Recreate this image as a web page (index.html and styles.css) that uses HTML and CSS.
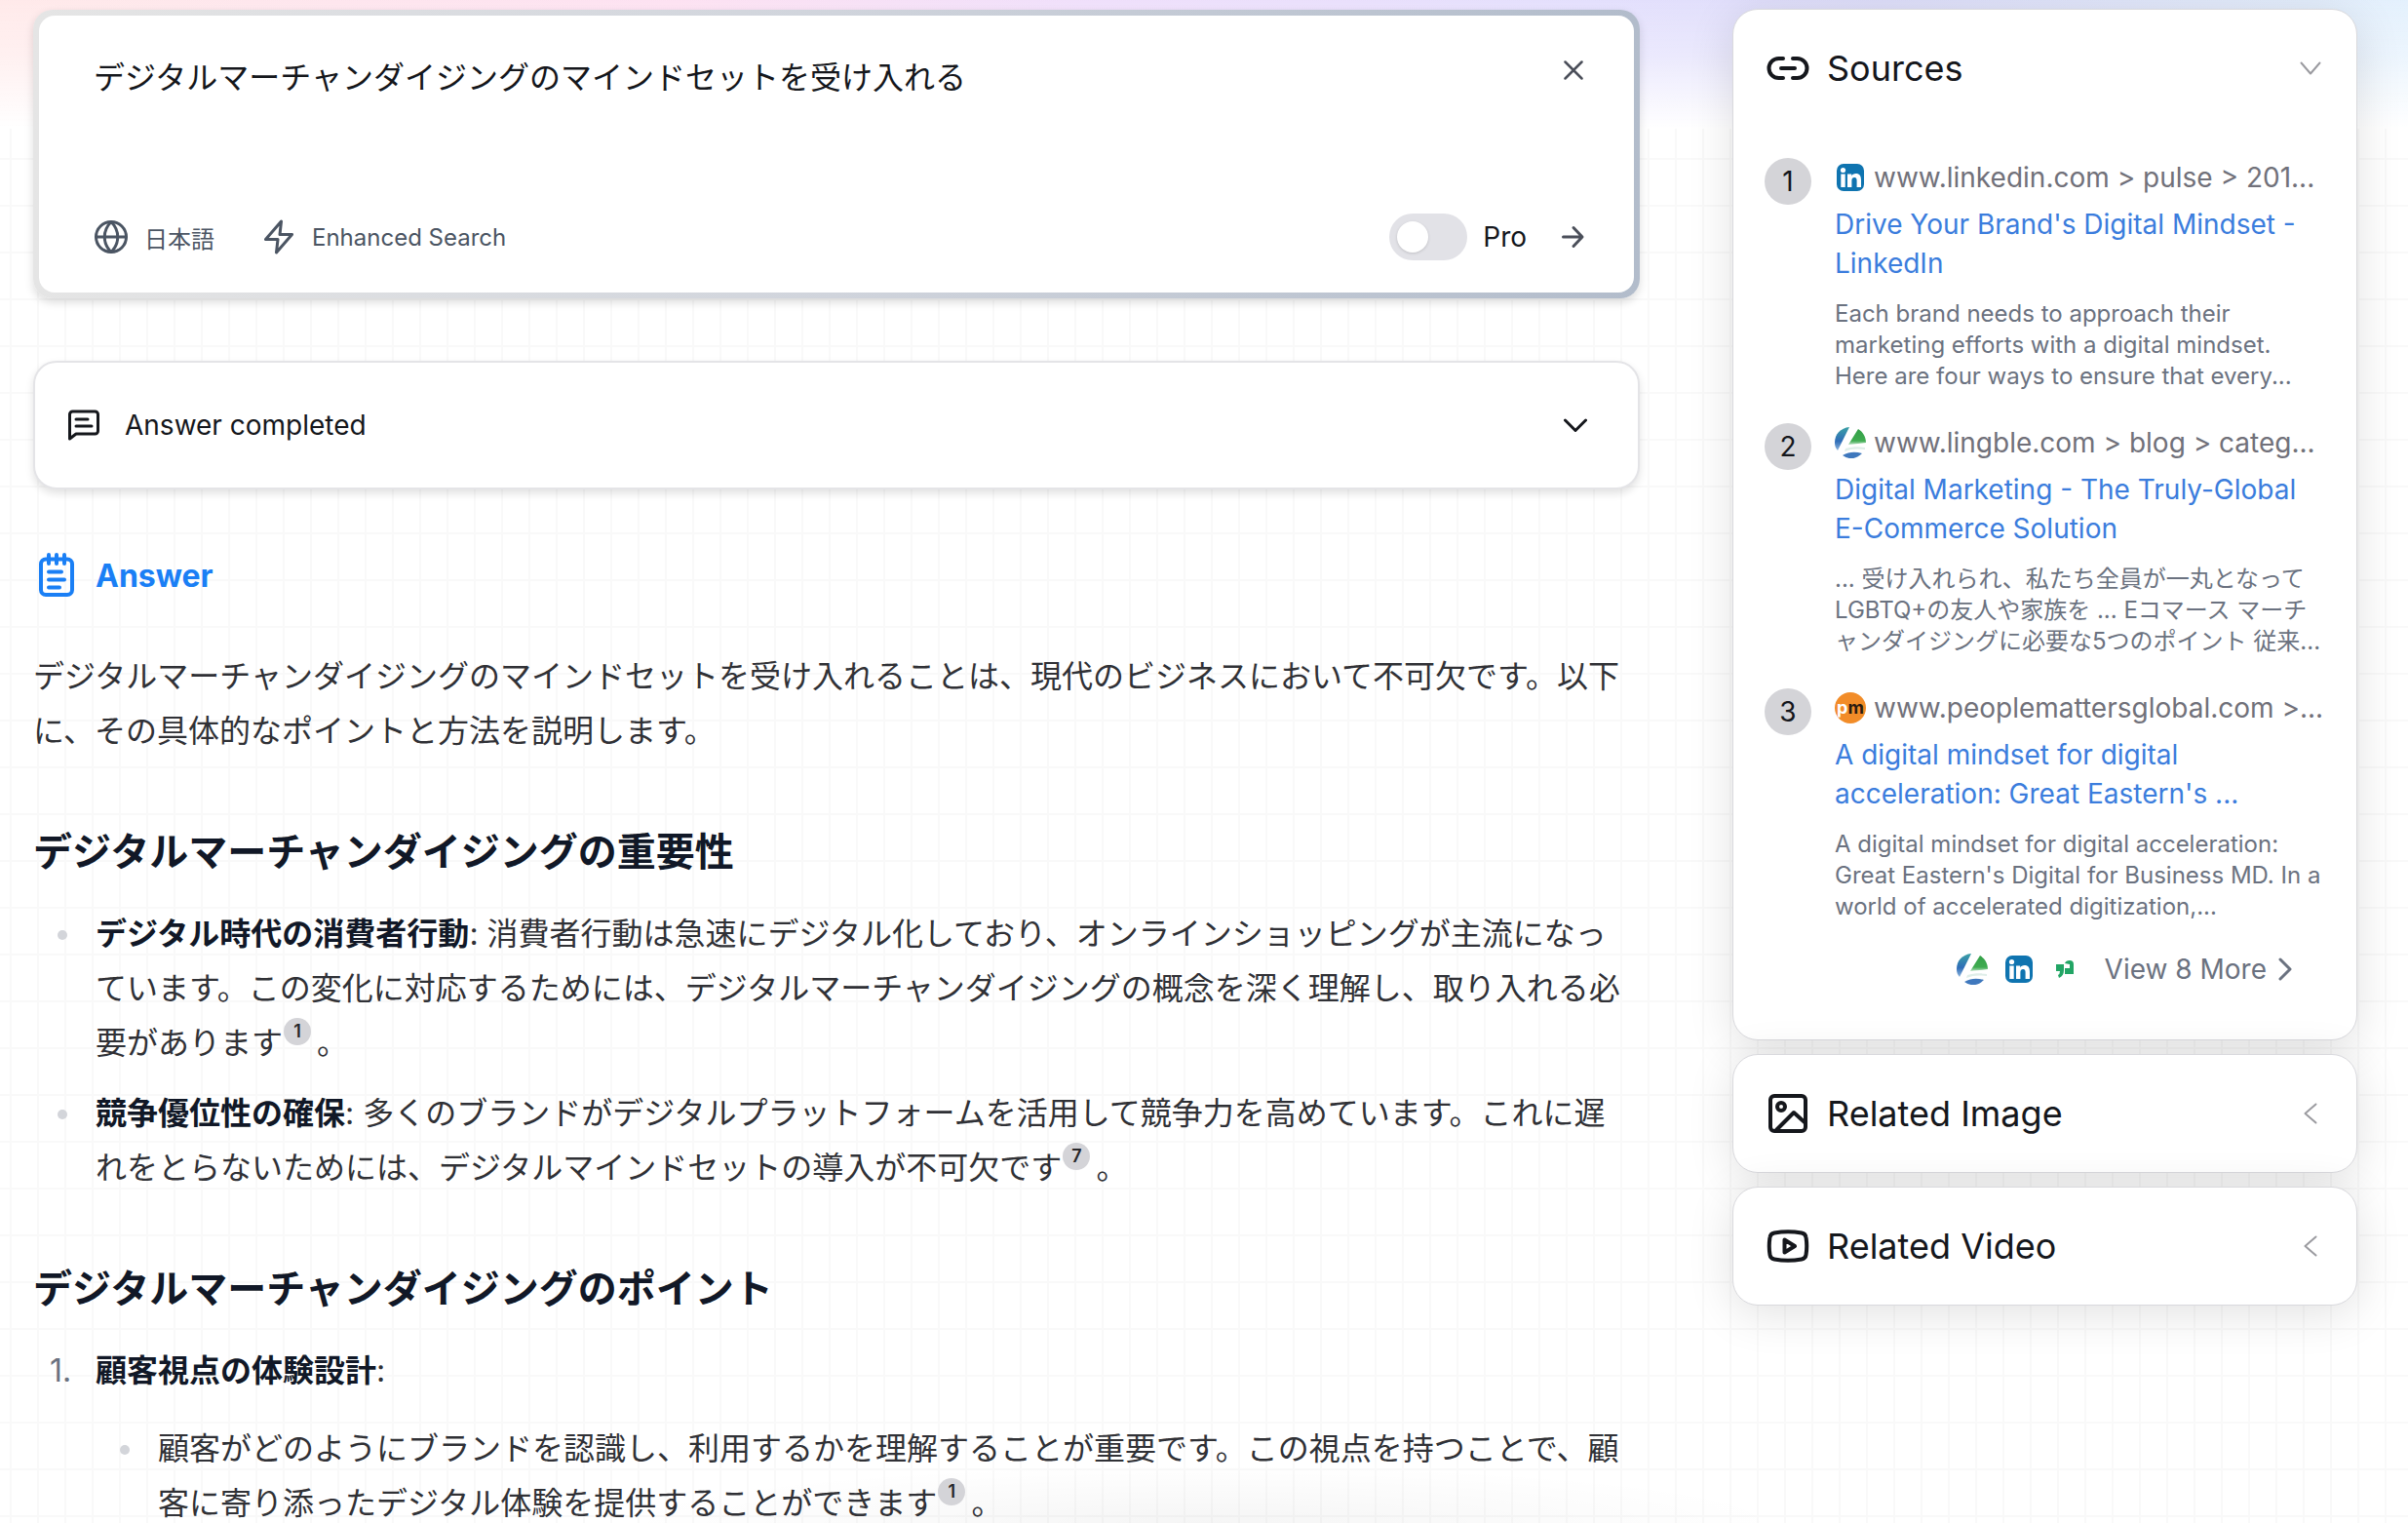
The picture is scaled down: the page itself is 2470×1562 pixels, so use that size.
FILE: index.html
```html
<!DOCTYPE html>
<html lang="ja">
<head>
<meta charset="utf-8">
<meta name="viewport" content="width=device-width, initial-scale=1">
<title>デジタルマーチャンダイジングのマインドセットを受け入れる</title>
<link rel="stylesheet" href="styles.css">
</head>
<body>
<svg class="defs" aria-hidden="true">
  <symbol id="linkedin" viewBox="0 0 32 32">
    <rect x="2" y="2" width="28" height="28" rx="7" fill="#0f74b0"/>
    <g fill="#fff"><circle cx="8.500" cy="8.500" r="2.600"/><rect x="6.300" y="12.500" width="4.400" height="13.500"/><path d="M13 12.500h4.200v1.900c.8-1.400 2.400-2.300 4.400-2.300 4 0 5.400 2.500 5.400 6.600V26h-4.400v-6.500c0-2-.5-3.500-2.400-3.500-2.100 0-2.800 1.500-2.800 3.500V26H13z"/></g>
  </symbol>
  <symbol id="lingble" viewBox="0 0 32 32">
    <defs>
      <linearGradient id="lg1" x1="0" y1="0" x2="0" y2="1"><stop offset="0" stop-color="#3aa0a5"/><stop offset=".6" stop-color="#2f6db8"/><stop offset="1" stop-color="#8db4dc"/></linearGradient>
      <linearGradient id="lg2" x1="0" y1="0" x2="0" y2="1"><stop offset="0" stop-color="#34a048"/><stop offset=".75" stop-color="#3fab50"/><stop offset="1" stop-color="#b5dfc0"/></linearGradient>
    </defs>
    <path d="M15 0C6 1 0 7 0 16c0 3 1 6 3 8z" fill="url(#lg1)"/>
    <path d="M24 2c5 3 8 8 8 14-5 1-11 1-18 2z" fill="url(#lg2)"/>
    <path d="M8 29c7-4 13-4 20-2-6 6-13 7-20 2z" fill="#3f78bd"/>
    <path d="M11 22c7-2 14-2 20-1v2c-7-1-14-1-21 2z" fill="#dfeee9"/>
  </symbol>
  <symbol id="chev" viewBox="0 0 24 24"><path d="M2.500 6.500L12 17.500l9.500-11"/></symbol>
</svg>

<div class="page">
  <main class="main">
    <form class="search">
      <div class="search-box">
        <div class="row">
          <input class="query" type="text" aria-label="検索" value="デジタルマーチャンダイジングのマインドセットを受け入れる">
          <button class="icon-btn" type="button" aria-label="Clear"><svg class="i20" viewBox="0 0 20 20"><path d="M1.500 1.500l17 17M18.500 1.500l-17 17"/></svg></button>
        </div>
        <div class="row tools">
          <button class="tool" type="button"><svg class="i36" viewBox="0 0 36 36"><circle cx="18" cy="18" r="15.500"/><path d="M2.500 18h31M18 2.500c-9 9-9 22 0 31M18 2.500c9 9 9 22 0 31"/></svg><span>日本語</span></button>
          <button class="tool" type="button"><svg class="i36" viewBox="0 0 36 36"><path d="M20.500 2L4.500 20.500H17L15.500 34 31.500 15.500H19z"/></svg><span>Enhanced Search</span></button>
          <label class="pro"><input class="switch" type="checkbox" role="switch"><span>Pro</span></label>
          <button class="icon-btn" type="submit" aria-label="Search"><svg class="i24" viewBox="0 0 24 24"><path d="M1.500 12h19M12 2.500l9 9.500-9 9.500"/></svg></button>
        </div>
      </div>
    </form>

    <button class="status" type="button">
      <svg class="i36" viewBox="0 0 36 36"><path d="M3.500 32V7a3 3 0 0 1 3-3h23a3 3 0 0 1 3 3v17a3 3 0 0 1-3 3H10zM10 12h12M10 19h16"/></svg>
      <span class="grow">Answer completed</span>
      <svg class="i24" viewBox="0 0 24 24"><path d="M1.500 7L12 17.500 22.500 7"/></svg>
    </button>

    <h2 class="answer-title">
      <svg class="note" viewBox="0 0 40 46"><rect x="4" y="6.500" width="32" height="36.500" rx="5"/><path d="M12 2v9M20 2v9M28 2v9M12 19.500h13M12 27.500h16M12 35.500h11"/></svg>
      <span>Answer</span>
    </h2>

    <article class="prose">
      <p>デジタルマーチャンダイジングのマインドセットを受け入れることは、現代のビジネスにおいて不可欠です。以下に、その具体的なポイントと方法を説明します。</p>
      <h3>デジタルマーチャンダイジングの重要性</h3>
      <ul>
        <li><strong>デジタル時代の消費者行動</strong>: 消費者行動は急速にデジタル化しており、オンラインショッピングが主流になっています。この変化に対応するためには、デジタルマーチャンダイジングの概念を深く理解し、取り入れる必要があります<a class="cite" href="#source-1">1</a>。</li>
        <li><strong>競争優位性の確保</strong>: 多くのブランドがデジタルプラットフォームを活用して競争力を高めています。これに遅れをとらないためには、デジタルマインドセットの導入が不可欠です<a class="cite" href="#source-7">7</a>。</li>
      </ul>
      <h3>デジタルマーチャンダイジングのポイント</h3>
      <ol>
        <li><strong>顧客視点の体験設計</strong>:
          <ul>
            <li>顧客がどのようにブランドを認識し、利用するかを理解することが重要です。この視点を持つことで、顧客に寄り添ったデジタル体験を提供することができます<a class="cite" href="#source-1">1</a>。</li>
          </ul>
        </li>
      </ol>
    </article>
  </main>

  <aside class="side">
    <section class="card">
      <button class="card-head" type="button">
        <svg class="i48" viewBox="0 0 48 48"><path d="M19 14h-4.500a10 10 0 0 0 0 20H19M29 14h4.500a10 10 0 0 1 0 20H29M17 24h14"/></svg>
        <span class="grow">Sources</span>
        <svg class="thin" viewBox="0 0 24 24"><use href="#chev"/></svg>
      </button>
      <ol class="sources">
        <li class="source" id="source-1">
          <span class="num">1</span>
          <div class="source-body">
            <div class="url"><svg class="fav"><use href="#linkedin"/></svg><span>www.linkedin.com &gt; pulse &gt; 201...</span></div>
            <a class="title" href="#source-1">Drive Your Brand's Digital Mindset - LinkedIn</a>
            <p class="snippet">Each brand needs to approach their marketing efforts with a digital mindset. Here are four ways to ensure that every...</p>
          </div>
        </li>
        <li class="source" id="source-2">
          <span class="num">2</span>
          <div class="source-body">
            <div class="url"><svg class="fav"><use href="#lingble"/></svg><span>www.lingble.com &gt; blog &gt; categ...</span></div>
            <a class="title" href="#source-2">Digital Marketing - The Truly-Global E-Commerce Solution</a>
            <p class="snippet">... 受け入れられ、私たち全員が一丸となって LGBTQ+の友人や家族を ... Eコマース マーチャンダイジングに必要な5つのポイント 従来...</p>
          </div>
        </li>
        <li class="source" id="source-3">
          <span class="num">3</span>
          <div class="source-body">
            <div class="url"><span class="fav pm"><span>p</span><span class="pm-m">m</span></span><span>www.peoplemattersglobal.com &gt;...</span></div>
            <a class="title" href="#source-3">A digital mindset for digital acceleration: Great Eastern's ...</a>
            <p class="snippet">A digital mindset for digital acceleration: Great Eastern's Digital for Business MD. In a world of accelerated digitization,...</p>
          </div>
        </li>
      </ol>
      <button class="more" type="button">
        <svg class="fav"><use href="#lingble"/></svg>
        <svg class="fav"><use href="#linkedin"/></svg>
        <svg class="fav" viewBox="0 0 32 32"><path d="M6 11h8v6q0 6-5 8l-1-3q2-1 2-4H6zM15 10q1-3 5-3 4 0 4 4v10h-9v-6h5v-4z" fill="#22a565"/></svg>
        <span class="more-text">View 8 More</span>
        <svg class="more-chev" viewBox="0 0 14 24"><path d="M2 2l10 10L2 22"/></svg>
      </button>
    </section>

    <section class="card">
      <button class="card-head" type="button">
        <svg class="i48" viewBox="0 0 48 48"><rect x="6" y="6" width="36" height="36" rx="4"/><circle cx="17" cy="17" r="4"/><path d="M12 41l18-18 11 10"/></svg>
        <span class="grow">Related Image</span>
        <svg class="thin left" viewBox="0 0 24 24"><use href="#chev"/></svg>
      </button>
    </section>
    <section class="card">
      <button class="card-head" type="button">
        <svg class="i48" viewBox="0 0 48 48"><path d="M10 10.500q14-2.500 28 0 4 .8 4.500 4.500 1.500 9 0 18-.5 3.700-4.500 4.500-14 2.500-28 0-4-.8-4.500-4.500-1.500-9 0-18 .5-3.700 4.500-4.500zM20.500 17.500v13L31 24z"/></svg>
        <span class="grow">Related Video</span>
        <svg class="thin left" viewBox="0 0 24 24"><use href="#chev"/></svg>
      </button>
    </section>
  </aside>
</div>
</body>
</html>
```

FILE: styles.css
```css
* { box-sizing: border-box; }

html { height: 100%; overflow: hidden; }

body {
  margin: 0;
  min-height: 100%;
  color: #15171c;
  font-family: Inter, "Noto Sans CJK JP", sans-serif;
  font-size: 28px;
  background:
    radial-gradient(ellipse 600px 60px at 50% 100%, rgba(0, 0, 0, .04), rgba(0, 0, 0, 0)) fixed,
    linear-gradient(to bottom, rgba(255, 255, 255, 0), rgba(255, 255, 255, .3) 56px, #fff 132px, rgba(255, 255, 255, 0) 132px),
    linear-gradient(to right, #ffeaea, #fde2f2 28%, #f0e0fb 45%, #e4e0fd 66%, #dedefa 78%, #e2eafb 92%, #e4f1fd) 0 0 / 100% 132px no-repeat,
    linear-gradient(to right, #f9f9f9 2px, transparent 2px) 10px 0 / 28px 48px,
    linear-gradient(to bottom, #f9f9f9 2px, transparent 2px) 0 18px / 28px 48px,
    #fff;
}

button, input { font: inherit; color: inherit; }
button { margin: 0; padding: 0; border: 0; background: none; text-align: left; }
h2, h3, p, ul, ol { margin: 0; padding: 0; }

svg { flex: none; fill: none; stroke: currentColor; stroke-width: 3; stroke-linecap: round; stroke-linejoin: round; }
.defs { position: absolute; width: 0; height: 0; }
.i20 { width: 20px; height: 20px; stroke-width: 2.500; }
.i24 { width: 24px; height: 24px; stroke-width: 3; }
.i36 { width: 36px; height: 36px; }
.i48 { width: 48px; height: 48px; stroke-width: 4; }
.thin { width: 24px; height: 24px; margin-right: 12px; stroke-width: 2; color: #9b9ba0; }
.left { transform: rotate(90deg); }
.grow { flex: 1; }

.page {
  display: grid;
  grid-template-columns: minmax(0, 1fr) 641px;
  column-gap: 95px;
  align-items: start;
  padding: 9px 52px 0 34px;
}
.main { padding-top: 1px; }

.search {
  padding: 6px;
  border-radius: 20px;
  background: linear-gradient(to right, #e5e5e5, #d0d4dc 50%, #b2bccb);
  box-shadow: 0 4px 10px rgba(0, 0, 0, .14);
}
.search-box { padding: 27px 50px 33px 56px; border-radius: 16px; background: #fff; }
.row { display: flex; align-items: center; }
.query { flex: 1; min-width: 0; height: 68px; padding: 0; border: 0; outline: 0; background: none; font-size: 32px; }
.icon-btn { display: flex; justify-content: center; width: 24px; color: #4b4f5a; }
.tools { margin-top: 108px; height: 48px; }
.row .i20 { margin-bottom: 10px; }
.tool { display: flex; align-items: center; gap: 16px; margin-right: 48px; color: #4b5563; font-size: 24px; }
.pro { display: flex; align-items: center; gap: 16px; margin: 0 36px 0 auto; }
.switch { appearance: none; display: flex; width: 80px; height: 48px; margin: 0; padding: 8px; border-radius: 24px; background: #e2e2e7; }
.switch::before { content: ""; width: 32px; height: 32px; border-radius: 50%; background: #fff; box-shadow: 0 1px 3px rgba(0, 0, 0, .15); }

.status {
  display: flex;
  align-items: center;
  gap: 24px;
  width: 100%;
  height: 132px;
  margin-top: 64px;
  padding: 0 52px 0 32px;
  border: 2px solid #e4e4e7;
  border-radius: 24px;
  background: #fff;
  box-shadow: 0 4px 8px rgba(0, 0, 0, .12);
}

.answer-title { display: flex; align-items: center; gap: 20px; height: 48px; margin-top: 64px; padding-left: 4px; color: #1a7ff5; font-size: 32px; font-weight: 700; }
.note { width: 40px; height: 46px; stroke-width: 4; }

.prose { margin-top: 52px; padding-right: 12px; color: #303136; font-size: 32px; line-height: 56px; }
.prose strong { color: #111827; font-weight: 700; }
.prose h3 { margin: 69px 0 29px; color: #111827; font-size: 40px; font-weight: 700; line-height: 54px; }
.prose ul { list-style: none; }
.prose li { position: relative; padding-left: 64px; }
.prose li + li { margin-top: 16px; }
.prose li ul { margin-top: 24px; }
.prose ul > li::before { content: ""; position: absolute; left: 25px; top: 24px; width: 10px; height: 10px; border-radius: 50%; background: #d3d5da; }
.prose ol { list-style: none; counter-reset: n; }
.prose ol > li { counter-increment: n; }
.prose ol > li::before { content: counter(n) "."; position: absolute; left: 17px; top: 0; color: #6b7280; }
.cite {
  display: inline-block;
  width: 28px;
  height: 28px;
  margin: 0 6px 0 1px;
  border-radius: 50%;
  background: #d4d4d8;
  color: #27272a;
  font-size: 18px;
  font-weight: 600;
  line-height: 28px;
  text-align: center;
  text-decoration: none;
  vertical-align: 17px;
}

.side { display: flex; flex-direction: column; gap: 14px; }
.card { border: 1px solid #d9d9dd; border-radius: 26px; background: #fff; box-shadow: 0 8px 48px rgba(0, 0, 0, .12); }
.card-head { display: flex; align-items: center; gap: 16px; width: 100%; height: 120px; padding: 0 23px 0 32px; font-size: 36px; }
.sources { display: flex; flex-direction: column; gap: 32px; margin-top: 32px; padding: 0 32px; list-style: none; }
.source { display: flex; gap: 24px; }
.num { flex: none; width: 48px; height: 48px; border-radius: 50%; background: #d4d4d8; line-height: 48px; text-align: center; }
.source-body { flex: 1; min-width: 0; }
.url { display: flex; align-items: center; gap: 8px; height: 40px; color: #71717a; white-space: nowrap; }
.fav { width: 32px; height: 32px; stroke: none; }
.pm { display: flex; flex: none; align-items: center; justify-content: center; border-radius: 50%; background: #f28c28; color: #fff; font-size: 18px; font-weight: 700; line-height: 32px; }
.pm-m { color: #2b1a10; }
.title { display: block; margin-top: 8px; color: #3b7ddd; line-height: 40px; text-decoration: none; }
.snippet { margin-top: 16px; color: #6b7280; font-size: 24px; line-height: 32px; }
.more { display: flex; align-items: center; gap: 16px; margin: 24px 66px 48px auto; height: 48px; color: #6b7280; }
.more-text { margin: 0 -4px 0 8px; }
.more-chev { width: 14px; height: 24px; }
```
